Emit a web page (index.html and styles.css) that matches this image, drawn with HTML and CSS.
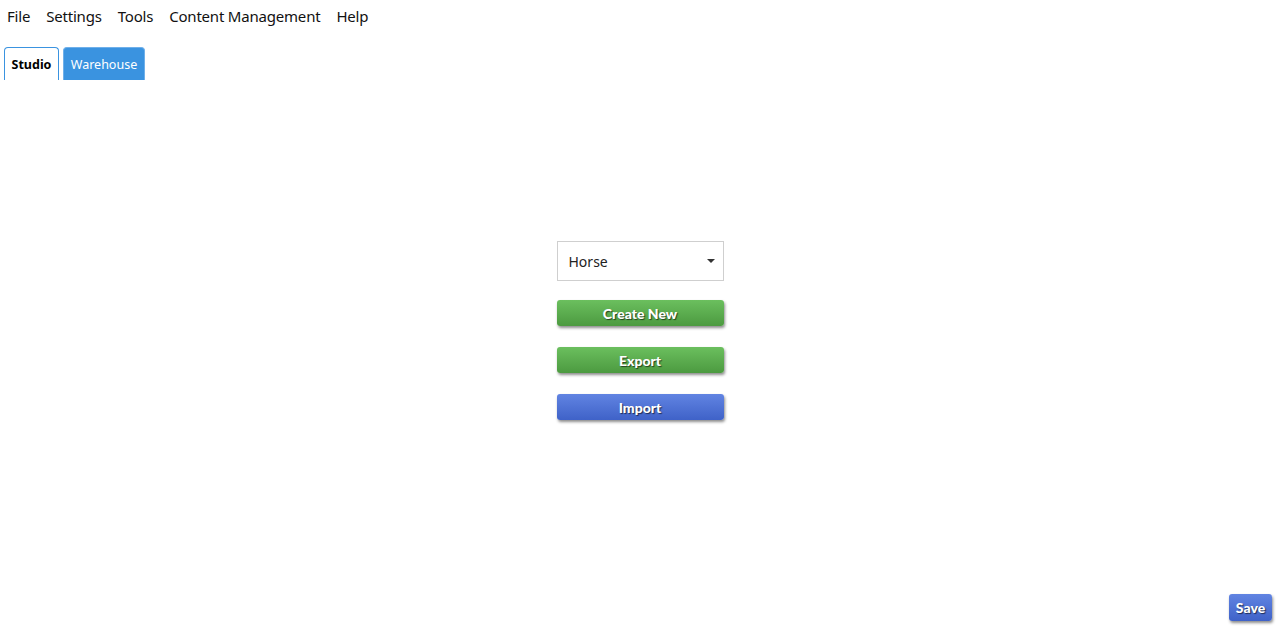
FILE: index.html
```html
<!DOCTYPE html>
<html lang="en">
<head>
    <meta charset="UTF-8">
    <title>Studio</title>
    <link rel="stylesheet" href="styles.css">
</head>
<body>
    <nav class="menubar">
        <a href="#">File</a>
        <a href="#">Settings</a>
        <a href="#">Tools</a>
        <a href="#">Content Management</a>
        <a href="#">Help</a>
    </nav>

    <div class="tabs">
        <button class="tab active">Studio</button>
        <button class="tab">Warehouse</button>
    </div>

    <div class="studio">
        <div class="picker">
            <span>Horse</span>
            <span class="caret"></span>
        </div>
        <button class="btn green">Create New</button>
        <button class="btn green">Export</button>
        <button class="btn blue">Import</button>
    </div>

    <div class="footer">
        <button class="btn blue save">Save</button>
    </div>
</body>
</html>
```

FILE: styles.css
```css
* {
    box-sizing: border-box;
    margin: 0;
    padding: 0;
}

body {
    font-family: "Noto Sans", "Open Sans", sans-serif;
    background: #fff;
    color: #111;
    height: 629px;
    display: flex;
    flex-direction: column;
}

.menubar {
    display: flex;
    gap: 16px;
    padding: 4px 7px 0;
    height: 34px;
}

.menubar a {
    color: #111;
    text-decoration: none;
    font-size: 15px;
    letter-spacing: -0.2px;
    line-height: 24px;
}

.tabs {
    display: flex;
    gap: 4px;
    padding: 13px 4px 0;
}

.tab {
    font-family: inherit;
    font-size: 12.5px;
    height: 33px;
    padding: 0 5px;
    border-radius: 4px 4px 0 0;
    cursor: pointer;
}

.tab.active {
    background: #fff;
    color: #000;
    font-weight: bold;
    border: 1px solid #3a93e0;
    border-bottom: none;
    width: 55px;
}

.tab:not(.active) {
    background: #3a93e0;
    color: #fff;
    border: 1px solid #6fb0ea;
    border-bottom: none;
    width: 82px;
}

.studio {
    display: flex;
    flex-direction: column;
    align-items: center;
    gap: 21px;
    padding-top: 161px;
    flex: 1;
}

.picker {
    width: 167px;
    height: 40px;
    border: 1px solid #cfcfcf;
    display: flex;
    align-items: center;
    justify-content: space-between;
    padding: 0 8px 0 11px;
    font-size: 14px;
    color: #222;
    margin-bottom: -2px;
}

.caret {
    width: 0;
    height: 0;
    border-left: 4px solid transparent;
    border-right: 4px solid transparent;
    border-top: 4px solid #333;
}

.btn {
    font-family: Lato, sans-serif;
    font-weight: 900;
    font-size: 14px;
    color: #fff;
    width: 167px;
    height: 26px;
    border: none;
    border-radius: 3px;
    cursor: pointer;
    text-shadow: 1px 1px 1px rgba(0, 0, 0, 0.6);
    box-shadow: 1px 2px 3px rgba(0, 0, 0, 0.45);
}

.btn.green {
    background: linear-gradient(#6bbf5e, #4c9a40);
}

.btn.blue {
    background: linear-gradient(#6184e2, #3f62c8);
}

.footer {
    display: flex;
    justify-content: flex-end;
    padding: 0 8px 8px 0;
}

.btn.save {
    width: 43px;
    height: 27px;
}
```
